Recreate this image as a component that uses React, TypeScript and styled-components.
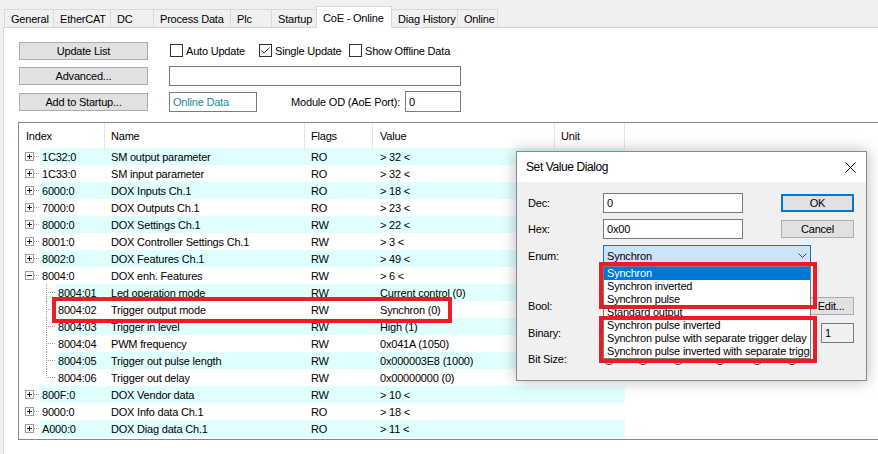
import React from 'react';
import styled, { createGlobalStyle } from 'styled-components';

const GlobalStyle = createGlobalStyle`
  html, body { margin: 0; padding: 0; background: #f0f0f0; }
  body {
    font-family: "Liberation Sans", Arial, sans-serif;
    font-size: 11px;
    letter-spacing: -0.2px;
    color: #000;
  }
  * { box-sizing: border-box; }
`;

const Window = styled.div`
  width: 878px;
  height: 454px;
  overflow: hidden;
  position: relative;
  display: flex;
  flex-direction: column;
  background: #f0f0f0;
`;

const TabStrip = styled.div`
  height: 27px;
  flex: none;
  display: flex;
  align-items: flex-end;
  padding-left: 4px;
  position: relative;
  z-index: 1;
`;

const Tab = styled.div<{ $w: number; $active?: boolean }>`
  width: ${(p) => p.$w}px;
  height: ${(p) => (p.$active ? 22 : 18)}px;
  margin-bottom: ${(p) => (p.$active ? -1 : 0)}px;
  margin-right: -1px;
  border: 1px solid #d9d9d9;
  border-bottom: none;
  background: ${(p) => (p.$active ? '#ffffff' : '#f0f0f0')};
  position: relative;
  z-index: ${(p) => (p.$active ? 2 : 1)};
  padding-left: 6px;
  display: flex;
  align-items: center;
  white-space: nowrap;
`;

const Panel = styled.div`
  flex: 1;
  margin-left: 3px;
  background: #ffffff;
  border-left: 1px solid #d9d9d9;
  border-top: 1px solid #d9d9d9;
  padding: 10px 0 0 14px;
  display: flex;
  flex-direction: column;
`;

const Controls = styled.div`
  margin-left: 1px;
  display: grid;
  grid-template-columns: 129px 292px;
  grid-template-rows: 25px 26px 25px;
  column-gap: 21px;
  align-items: center;
`;

const Button = styled.div<{ $w?: number; $primary?: boolean }>`
  width: ${(p) => p.$w ?? 129}px;
  height: 18px;
  background: #e1e1e1;
  border: ${(p) => (p.$primary ? '2px solid #0078d7' : '1px solid #adadad')};
  display: flex;
  align-items: center;
  justify-content: center;
  white-space: nowrap;
`;

const CheckRow = styled.div`
  display: flex;
  align-items: center;
  margin-left: 1px;
`;

const CheckItem = styled.div<{ $w?: number }>`
  display: flex;
  align-items: center;
  gap: 3px;
  width: ${(p) => (p.$w ? `${p.$w}px` : 'auto')};
  white-space: nowrap;
`;

const CheckBox = styled.div`
  width: 13px;
  height: 13px;
  border: 1px solid #333333;
  background: #fff;
  display: flex;
  align-items: center;
  justify-content: center;
`;

const TextBox = styled.div<{ $w: number; $h?: number; $color?: string; $bg?: string }>`
  width: ${(p) => p.$w}px;
  height: ${(p) => p.$h ?? 20}px;
  border: 1px solid #7a7a7a;
  background: ${(p) => p.$bg ?? '#ffffff'};
  color: ${(p) => p.$color ?? '#000'};
  padding-left: 3px;
  display: flex;
  align-items: center;
  white-space: nowrap;
  overflow: hidden;
`;

const ThirdRow = styled.div`
  display: flex;
  align-items: center;
`;

const PortLabel = styled.div`
  margin-left: auto;
  margin-right: 5px;
  white-space: nowrap;
`;

const Table = styled.div`
  margin-top: 8px;
  width: 870px;
  height: 318px;
  border: 1px solid #828790;
  border-right: none;
  background: #fff;
  display: flex;
  flex-direction: column;
`;

const HeaderRow = styled.div`
  height: 25px;
  display: flex;
  flex: none;
`;

const HeaderCell = styled.div<{ $w: number; $pl: number }>`
  width: ${(p) => p.$w}px;
  padding-left: ${(p) => p.$pl}px;
  border-right: 1px solid #e5e5e5;
  display: flex;
  align-items: center;
`;

const Row = styled.div`
  height: 17px;
  display: flex;
  position: relative;
  flex: none;
`;

const Gutter = styled.div<{ $w: number }>`
  width: ${(p) => p.$w}px;
  flex: none;
  display: flex;
`;

const Stripe = styled.div<{ $cyan: boolean }>`
  display: flex;
  background: ${(p) => (p.$cyan ? '#e0ffff' : '#ffffff')};
`;

const Cell = styled.div<{ $w: number; $pl: number }>`
  width: ${(p) => p.$w}px;
  padding-left: ${(p) => p.$pl}px;
  display: flex;
  align-items: center;
  white-space: nowrap;
  overflow: hidden;
`;

const Mark = styled.div<{ $l: number; $t: number; $w: number; $h: number }>`
  position: absolute;
  left: ${(p) => p.$l}px;
  top: ${(p) => p.$t}px;
  width: ${(p) => p.$w}px;
  height: ${(p) => p.$h}px;
  border: 4px solid #ed1c24;
  z-index: 3;
  pointer-events: none;
`;

const Dialog = styled.div`
  position: absolute;
  left: 516px;
  top: 151px;
  width: 351px;
  height: 230px;
  border: 1px solid #8a8a8a;
  background: #f0f0f0;
  box-shadow: 0 0 14px rgba(0, 0, 0, 0.28);
  display: flex;
  flex-direction: column;
  z-index: 5;
`;

const TitleBar = styled.div`
  height: 30px;
  flex: none;
  background: #fff;
  display: flex;
  align-items: center;
  justify-content: space-between;
  padding: 0 10px 0 9px;
  font-size: 12px;
  letter-spacing: -0.4px;
`;

const DialogBody = styled.div`
  padding: 8px 12px 0 11px;
  display: flex;
  flex-direction: column;
`;

const FieldRow = styled.div<{ $h: number; $mt?: number }>`
  height: ${(p) => p.$h}px;
  margin-top: ${(p) => p.$mt ?? 0}px;
  display: flex;
  align-items: center;
`;

const FieldLabel = styled.div`
  width: 75px;
  flex: none;
`;

const Combo = styled.div`
  position: relative;
  width: 208px;
  height: 21px;
  border: 1px solid #0078d7;
  background: #cce4f7;
  padding-left: 3px;
  display: flex;
  align-items: center;
`;

const Chevron = styled.svg`
  margin-left: auto;
  margin-right: 3px;
`;

const DropList = styled.div`
  position: absolute;
  left: -1px;
  top: 20px;
  width: 208px;
  border: 1px solid #7a7a7a;
  background: #fff;
  display: flex;
  flex-direction: column;
  z-index: 2;
`;

const DropItem = styled.div<{ $sel?: boolean }>`
  height: 13px;
  line-height: 13px;
  padding-left: 3px;
  white-space: nowrap;
  overflow: hidden;
  background: ${(p) => (p.$sel ? '#0078d7' : 'transparent')};
  color: ${(p) => (p.$sel ? '#fff' : '#000')};
`;

const RightSlot = styled.div`
  margin-left: auto;
  display: flex;
`;

const RadioItem = styled.div<{ $w: number }>`
  width: ${(p) => p.$w}px;
  display: flex;
  align-items: center;
  gap: 3px;
  flex: none;
`;

const RadioCircle = styled.div`
  width: 12px;
  height: 12px;
  border-radius: 50%;
  border: 1px solid #333;
  background: #fff;
`;

type Item = {
  idx: string;
  name: string;
  flags: string;
  value: string;
  lvl?: number;
  exp?: '+' | '-';
  last?: boolean;
  mark?: boolean;
};

const rows: Item[] = [
  { idx: '1C32:0', name: 'SM output parameter', flags: 'RO', value: '> 32 <', exp: '+' },
  { idx: '1C33:0', name: 'SM input parameter', flags: 'RO', value: '> 32 <', exp: '+' },
  { idx: '6000:0', name: 'DOX Inputs Ch.1', flags: 'RO', value: '> 18 <', exp: '+' },
  { idx: '7000:0', name: 'DOX Outputs Ch.1', flags: 'RO', value: '> 23 <', exp: '+' },
  { idx: '8000:0', name: 'DOX Settings Ch.1', flags: 'RW', value: '> 22 <', exp: '+' },
  { idx: '8001:0', name: 'DOX Controller Settings Ch.1', flags: 'RW', value: '> 3 <', exp: '+' },
  { idx: '8002:0', name: 'DOX Features Ch.1', flags: 'RW', value: '> 49 <', exp: '+' },
  { idx: '8004:0', name: 'DOX enh. Features', flags: 'RW', value: '> 6 <', exp: '-' },
  { idx: '8004:01', name: 'Led operation mode', flags: 'RW', value: 'Current control (0)', lvl: 1 },
  { idx: '8004:02', name: 'Trigger output mode', flags: 'RW', value: 'Synchron (0)', lvl: 1, mark: true },
  { idx: '8004:03', name: 'Trigger in level', flags: 'RW', value: 'High (1)', lvl: 1 },
  { idx: '8004:04', name: 'PWM frequency', flags: 'RW', value: '0x041A (1050)', lvl: 1 },
  { idx: '8004:05', name: 'Trigger out pulse length', flags: 'RW', value: '0x000003E8 (1000)', lvl: 1 },
  { idx: '8004:06', name: 'Trigger out delay', flags: 'RW', value: '0x00000000 (0)', lvl: 1, last: true },
  { idx: '800F:0', name: 'DOX Vendor data', flags: 'RW', value: '> 10 <', exp: '+' },
  { idx: '9000:0', name: 'DOX Info data Ch.1', flags: 'RO', value: '> 18 <', exp: '+' },
  { idx: 'A000:0', name: 'DOX Diag data Ch.1', flags: 'RO', value: '> 11 <', exp: '+' },
];

const tabs = [
  { t: 'General', w: 50 },
  { t: 'EtherCAT', w: 58 },
  { t: 'DC', w: 44 },
  { t: 'Process Data', w: 78 },
  { t: 'Plc', w: 42 },
  { t: 'Startup', w: 46 },
  { t: 'CoE - Online', w: 76, active: true },
  { t: 'Diag History', w: 67 },
  { t: 'Online', w: 41 },
];

const enumItems = [
  'Synchron',
  'Synchron inverted',
  'Synchron pulse',
  'Standard output',
  'Synchron pulse inverted',
  'Synchron pulse with separate trigger delay',
  'Synchron pulse inverted with separate trigger delay',
];

const radios = [
  { l: '1', w: 34 },
  { l: '8', w: 35 },
  { l: '16', w: 42 },
  { l: '32', w: 37 },
  { l: '64', w: 35 },
  { l: '?', w: 30 },
];

const TreeTop: React.FC<{ exp: '+' | '-' }> = ({ exp }) => (
  <svg width="21" height="17" viewBox="0 0 21 17">
    <rect x="6.5" y="4.5" width="8" height="8" fill="#fff" stroke="#a0a0a0" />
    <line x1="8" y1="8.5" x2="13" y2="8.5" stroke="#222" />
    {exp === '+' && <line x1="10.5" y1="6" x2="10.5" y2="11" stroke="#222" />}
    <line x1="15" y1="8.5" x2="21" y2="8.5" stroke="#a0a0a0" strokeDasharray="1 1" />
  </svg>
);

const TreeChild: React.FC<{ last?: boolean }> = ({ last }) => (
  <svg width="37" height="17" viewBox="0 0 37 17">
    <line x1="27.5" y1="0" x2="27.5" y2={last ? 9 : 17} stroke="#a0a0a0" strokeDasharray="1 1" />
    <line x1="29" y1="8.5" x2="37" y2="8.5" stroke="#a0a0a0" strokeDasharray="1 1" />
  </svg>
);

const Check = () => (
  <svg width="11" height="11" viewBox="0 0 11 11">
    <polyline points="1.5,5.5 4,8 9.5,2.5" fill="none" stroke="#333" strokeWidth="1" />
  </svg>
);

export default function App() {
  return (
    <>
      <GlobalStyle />
      <Window>
        <TabStrip>
          {tabs.map((t) => (
            <Tab key={t.t} $w={t.w} $active={t.active}>
              {t.t}
            </Tab>
          ))}
        </TabStrip>
        <Panel>
          <Controls>
            <Button>Update List</Button>
            <CheckRow>
              <CheckItem $w={89}>
                <CheckBox />
                Auto Update
              </CheckItem>
              <CheckItem $w={90}>
                <CheckBox>
                  <Check />
                </CheckBox>
                Single Update
              </CheckItem>
              <CheckItem>
                <CheckBox />
                Show Offline Data
              </CheckItem>
            </CheckRow>
            <Button>Advanced...</Button>
            <TextBox $w={292} />
            <Button>Add to Startup...</Button>
            <ThirdRow>
              <TextBox $w={88} $color="#128a9f">
                Online Data
              </TextBox>
              <PortLabel>Module OD (AoE Port):</PortLabel>
              <TextBox $w={56} $h={21}>
                0
              </TextBox>
            </ThirdRow>
          </Controls>

          <Table>
            <HeaderRow>
              <HeaderCell $w={86} $pl={7}>Index</HeaderCell>
              <HeaderCell $w={200} $pl={6}>Name</HeaderCell>
              <HeaderCell $w={68} $pl={6}>Flags</HeaderCell>
              <HeaderCell $w={182} $pl={7}>Value</HeaderCell>
              <HeaderCell $w={70} $pl={6}>Unit</HeaderCell>
            </HeaderRow>
            {rows.map((r, i) => {
              const child = r.lvl === 1;
              const gw = child ? 37 : 21;
              return (
                <Row key={r.idx}>
                  <Gutter $w={gw}>{child ? <TreeChild last={r.last} /> : <TreeTop exp={r.exp ?? '+'} />}</Gutter>
                  <Stripe $cyan={i % 2 === 0}>
                    <Cell $w={86 - gw} $pl={2}>{r.idx}</Cell>
                    <Cell $w={200} $pl={6}>{r.name}</Cell>
                    <Cell $w={68} $pl={6}>{r.flags}</Cell>
                    <Cell $w={182} $pl={7}>{r.value}</Cell>
                    <Cell $w={70} $pl={6} />
                  </Stripe>
                  {r.mark && <Mark $l={33} $t={-4} $w={400} $h={26} />}
                </Row>
              );
            })}
          </Table>
        </Panel>

        <Dialog>
          <TitleBar>
            <span>Set Value Dialog</span>
            <svg width="11" height="11" viewBox="0 0 11 11">
              <line x1="0.5" y1="0.5" x2="10.5" y2="10.5" stroke="#000" />
              <line x1="10.5" y1="0.5" x2="0.5" y2="10.5" stroke="#000" />
            </svg>
          </TitleBar>
          <DialogBody>
            <FieldRow $h={26}>
              <FieldLabel>Dec:</FieldLabel>
              <TextBox $w={140}>0</TextBox>
              <RightSlot>
                <Button $w={73} $primary>OK</Button>
              </RightSlot>
            </FieldRow>
            <FieldRow $h={26}>
              <FieldLabel>Hex:</FieldLabel>
              <TextBox $w={140}>0x00</TextBox>
              <RightSlot>
                <Button $w={73}>Cancel</Button>
              </RightSlot>
            </FieldRow>
            <FieldRow $h={27}>
              <FieldLabel>Enum:</FieldLabel>
              <Combo>
                Synchron
                <Chevron width="9" height="5" viewBox="0 0 9 5">
                  <polyline points="0.5,0.5 4.5,4.5 8.5,0.5" fill="none" stroke="#444" />
                </Chevron>
                <DropList>
                  {enumItems.map((e, i) => (
                    <DropItem key={e} $sel={i === 0}>
                      {e}
                    </DropItem>
                  ))}
                </DropList>
              </Combo>
            </FieldRow>
            <FieldRow $h={26} $mt={24}>
              <FieldLabel>Bool:</FieldLabel>
              <RightSlot>
                <Button $w={46}>Edit...</Button>
              </RightSlot>
            </FieldRow>
            <FieldRow $h={27}>
              <FieldLabel>Binary:</FieldLabel>
              <RightSlot>
                <TextBox $w={33} $bg="#f0f0f0">1</TextBox>
              </RightSlot>
            </FieldRow>
            <FieldRow $h={25}>
              <FieldLabel>Bit Size:</FieldLabel>
              {radios.map((r) => (
                <RadioItem key={r.l} $w={r.w}>
                  <RadioCircle />
                  {r.l}
                </RadioItem>
              ))}
            </FieldRow>
          </DialogBody>
          <Mark $l={82} $t={110} $w={218} $h={47} />
          <Mark $l={82} $t={164} $w={218} $h={47} />
        </Dialog>
      </Window>
    </>
  );
}
